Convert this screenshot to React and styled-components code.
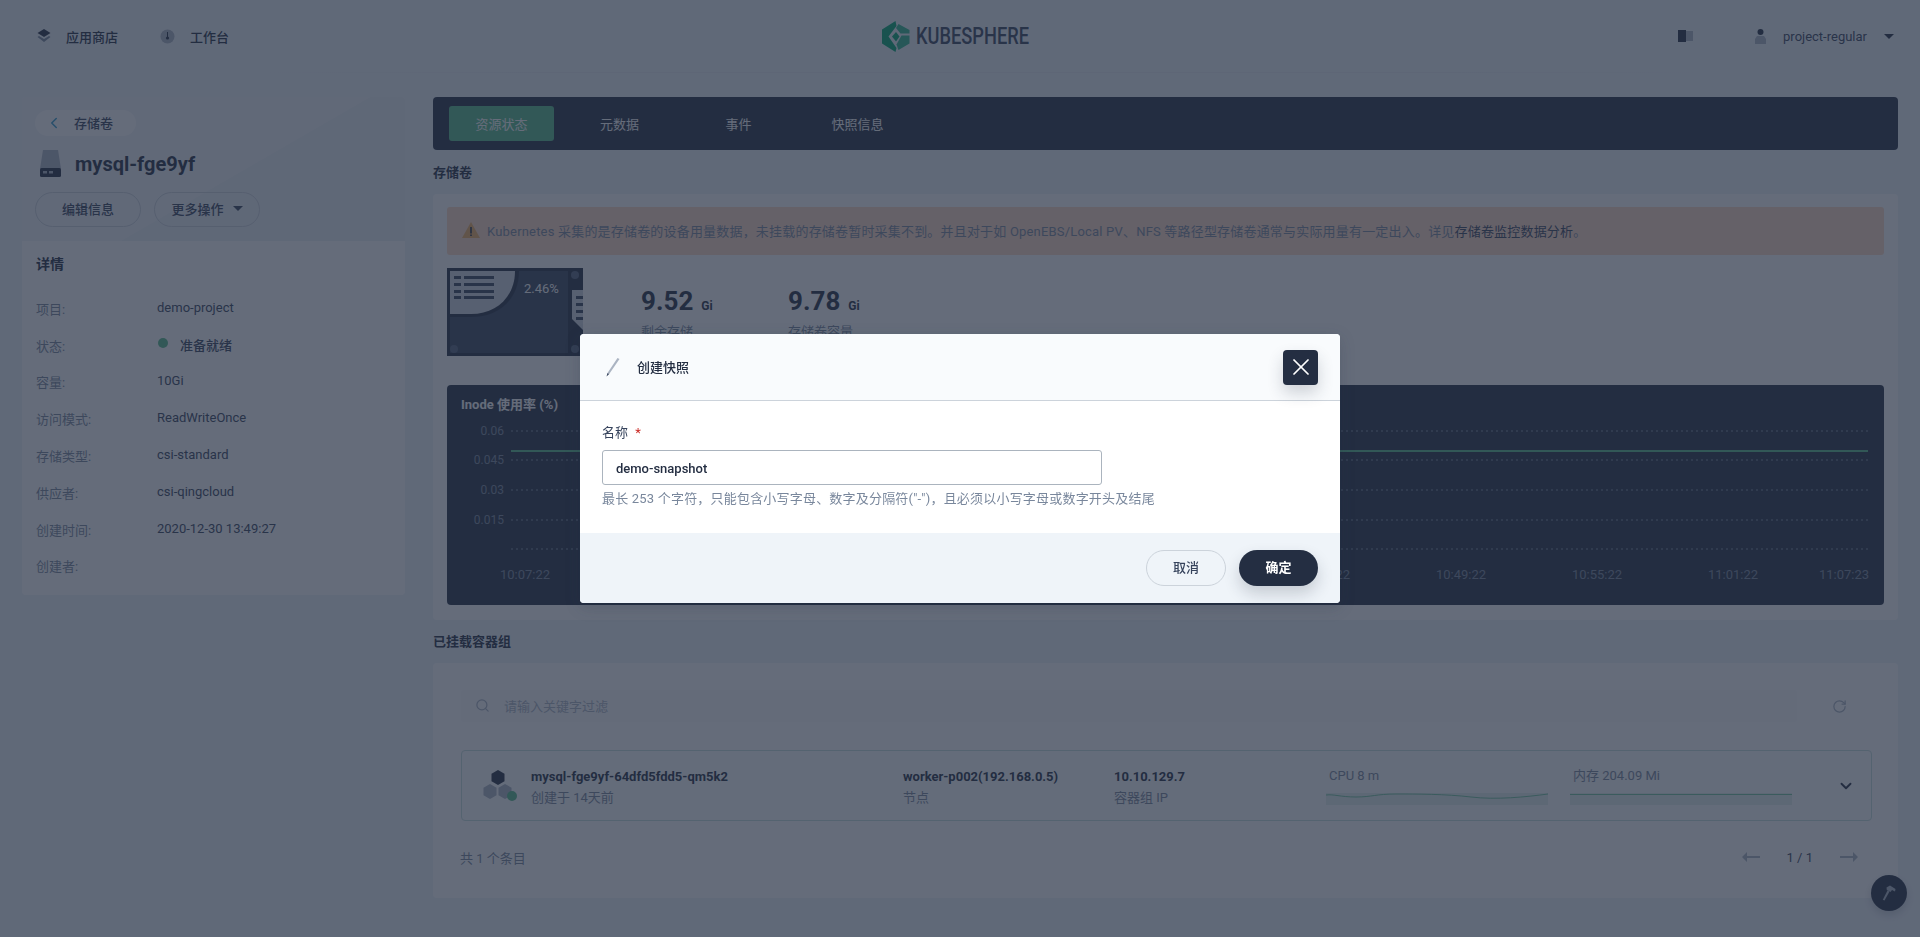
import React from 'react';
import styled, { createGlobalStyle } from 'styled-components';
import { Search, RotateCw, ChevronLeft, ChevronDown, X } from 'lucide-react';

const GlobalStyle = createGlobalStyle`
  html, body {
    margin: 0;
    padding: 0;
    height: 100%;
    background: #eff4f9;
    overflow: hidden;
  }
  body {
    font-family: Roboto, "Noto Sans CJK SC", sans-serif;
    font-size: 13px;
    color: #36435c;
  }
  * { box-sizing: border-box; }
`;

const Page = styled.div`
  height: 937px;
  padding: 0 22px;
`;

const Header = styled.header`
  height: 73px;
  margin: 0 -22px;
  padding: 0 26px 0 22px;
  display: grid;
  grid-template-columns: 1fr auto 1fr;
  align-items: center;
  border-bottom: 1px solid;
  border-image: linear-gradient(90deg, transparent 12%, #e6ebf1 30%, #e6ebf1 74%, transparent 90%) 1;
`;

const NavLeft = styled.nav`
  display: flex;
  align-items: center;
  gap: 42px;
  padding-left: 15px;
`;

const NavItem = styled.a`
  display: flex;
  align-items: center;
  gap: 15px;
  font-weight: 500;
  color: #242e42;
`;

const Logo = styled.div`
  display: flex;
  align-items: center;
  gap: 6px;
  margin-left: -6px;
`;

const LogoText = styled.span`
  display: inline-block;
  width: 113px;
  font-size: 24px;
  line-height: 30px;
  font-weight: 500;
  color: #36435c;
  white-space: nowrap;
  transform: scaleX(0.76);
  transform-origin: left center;
`;

const NavRight = styled.div`
  display: flex;
  align-items: center;
  justify-content: flex-end;
  color: #36435c;
`;

const UserName = styled.span`
  margin: 0 17px 0 16px;
`;

const BookWrap = styled.span`
  display: flex;
  margin-right: 60px;
`;

const Caret = styled.span`
  display: inline-block;
  width: 0;
  height: 0;
  border-left: 5px solid transparent;
  border-right: 5px solid transparent;
  border-top: 5px solid ${p => p.$color || '#242e42'};
`;

const Layout = styled.div`
  display: grid;
  grid-template-columns: 383px 1fr;
  column-gap: 28px;
  padding-top: 24px;
`;

const Side = styled.aside`
  align-self: start;
  border-radius: 4px;
  background: #f9fbfd;
`;

const SideHead = styled.div`
  height: 144px;
  padding: 13px 13px 0;
  background:
    linear-gradient(150deg, transparent 55%, rgba(200, 212, 225, .12) 55.2%),
    #f1f4f8;
  border-radius: 4px 4px 0 0;
`;

const BackPill = styled.a`
  display: inline-flex;
  align-items: center;
  width: 101px;
  height: 26px;
  padding: 0 0 1px 10px;
  border-radius: 13px;
  background: #fff;
  font-weight: 500;
  color: #36435c;
`;

const BackText = styled.span`
  margin-left: 11px;
`;

const TitleRow = styled.div`
  display: flex;
  align-items: center;
  gap: 13px;
  margin-top: 14px;
  padding-left: 5px;
  height: 27px;
`;

const Title = styled.h1`
  margin: 0;
  font-size: 20px;
  line-height: 28px;
  font-weight: 700;
  color: #242e42;
`;

const ActionRow = styled.div`
  display: flex;
  gap: 13px;
  margin-top: 15px;
`;

const GhostButton = styled.button`
  display: flex;
  align-items: center;
  justify-content: center;
  gap: 9px;
  width: ${p => p.$width || 106}px;
  height: 35px;
  padding: 0 0 3px;
  border-radius: 18px;
  border: 1px solid #ccd3db;
  background: transparent;
  font: 500 13px Roboto, "Noto Sans CJK SC", sans-serif;
  color: #36435c;
`;

const Details = styled.div`
  padding: 12px 14px 12px;
  background: #fff;
  border-radius: 0 0 4px 4px;
`;

const DetailsTitle = styled.h3`
  margin: 0 0 14px;
  font-size: 14px;
  line-height: 22px;
  font-weight: 700;
  color: #242e42;
`;

const DetailRow = styled.div`
  display: grid;
  grid-template-columns: 121px 1fr;
  height: 36.8px;
  align-items: center;
`;

const DetailLabel = styled.span`
  color: #79879c;
  padding-top: 2px;
`;

const DetailValue = styled.span`
  display: flex;
  align-items: center;
  gap: 12px;
  color: #36435c;
  font-weight: ${p => (p.$bold ? 500 : 400)};
`;

const Dot = styled.i`
  width: 10px;
  height: 10px;
  margin: 0 0 2px 1px;
  border-radius: 50%;
  background: #55bc8a;
`;

const Main = styled.main`
  min-width: 0;
`;

const Tabs = styled.div`
  display: flex;
  align-items: center;
  height: 53px;
  padding-left: 16px;
  border-radius: 4px;
  background: #242e42;
`;

const Tab = styled.a`
  width: ${p => (p.$active ? 105 : 119)}px;
  height: 35px;
  margin-left: ${p => (p.$active ? 0 : p.$first ? 6 : 0)}px;
  padding-bottom: 1px;
  display: flex;
  align-items: center;
  justify-content: center;
  border-radius: 3px;
  color: #fff;
  background: ${p => (p.$active ? '#55bc8a' : 'transparent')};
`;

const SectionTitle = styled.h4`
  margin: ${p => p.$top}px 0 11px;
  font-size: 13px;
  line-height: 20px;
  font-weight: 700;
  color: #242e42;
`;

const Card = styled.section`
  height: ${p => p.$height}px;
  padding: ${p => p.$pad};
  border-radius: 4px;
  background: #fff;
`;

const Alert = styled.div`
  display: flex;
  align-items: center;
  gap: 7px;
  height: 48px;
  padding: 0 0 2px 15px;
  border-radius: 3px;
  background: #ffd9c2;
  color: #79879c;
  white-space: nowrap;
  letter-spacing: .19px;
  b {
    font-weight: 400;
    color: #36435c;
  }
`;

const DiskRow = styled.div`
  display: flex;
  margin-top: 13px;
  height: 88px;
`;

const Stats = styled.div`
  display: flex;
  margin-left: 58px;
  padding-top: 16px;
`;

const Stat = styled.div`
  width: 147px;
`;

const StatValue = styled.div`
  font-size: 26px;
  line-height: 34px;
  font-weight: 700;
  color: #242e42;
  small {
    margin-left: 8px;
    font-size: 12px;
    font-weight: 700;
  }
`;

const StatLabel = styled.div`
  margin-top: -1px;
  line-height: 20px;
  color: #79879c;
`;

const ChartPanel = styled.div`
  height: 220px;
  margin-top: 29px;
  border-radius: 4px;
  background: #242e42;
  svg { display: block; }
`;

const SearchBar = styled.div`
  display: flex;
  align-items: center;
  justify-content: space-between;
  height: 32px;
`;

const SearchBox = styled.div`
  flex: 1;
  height: 32px;
  display: flex;
  align-items: center;
  gap: 14px;
  padding: 0 0 1px 14px;
  border-radius: 3px;
  background: #fafbfc;
  color: #abb4c2;
`;

const RefreshWrap = styled.span`
  display: flex;
  width: 75px;
  justify-content: center;
  padding-left: 10px;
  color: #abb4c2;
`;

const PodRow = styled.div`
  display: grid;
  grid-template-columns: 48px 372px 211px 212px 244px 223px 1fr;
  align-items: center;
  height: 71px;
  margin-top: 28px;
  padding-left: 21px;
  border: 1px solid #c7e0dd;
  border-radius: 4px;
  background: #fbfdfd;
`;

const PodCell = styled.div`
  padding-top: 3px;
  line-height: 18px;
`;

const PodMain = styled.div`
  font-size: 13px;
  font-weight: 700;
  color: #242e42;
  margin-bottom: 3px;
`;

const PodSub = styled.div`
  color: #79879c;
`;

const MetricLabel = styled.div`
  padding-left: 3px;
  color: #79879c;
  line-height: 18px;
  margin-bottom: 8px;
`;

const SparkWrap = styled.div`
  width: 222px;
  height: 12px;
  background: #e4f0ef;
  svg { display: block; }
`;

const ExpandWrap = styled.div`
  display: flex;
  color: #242e42;
  padding-left: 44px;
`;

const Pager = styled.div`
  display: flex;
  align-items: center;
  justify-content: space-between;
  height: 20px;
  margin-top: 26px;
  padding-right: 14px;
  color: #79879c;
`;

const PagerText = styled.span`
  margin-left: -1px;
`;

const PagerRight = styled.div`
  display: flex;
  align-items: center;
  gap: 27px;
  color: #36435c;
`;

const ArrowSvg = styled.svg`
  transform: ${p => (p.$flip ? 'scaleX(-1)' : 'none')};
`;

const FloatButton = styled.div`
  position: fixed;
  right: 13px;
  bottom: 26px;
  width: 36px;
  height: 36px;
  border-radius: 50%;
  display: flex;
  align-items: center;
  justify-content: center;
  background: #242e42;
  box-shadow: 0 4px 8px rgba(36, 46, 66, .2);
`;

const Mask = styled.div`
  position: fixed;
  inset: 0;
  display: flex;
  align-items: center;
  justify-content: center;
  background: rgba(35, 45, 65, .7);
`;

const Modal = styled.div`
  width: 760px;
  height: 269px;
  display: flex;
  flex-direction: column;
  border-radius: 4px;
  background: #fff;
  overflow: hidden;
  box-shadow: 0 4px 16px rgba(35, 45, 65, .2);
`;

const ModalHead = styled.div`
  display: flex;
  align-items: center;
  height: 67px;
  padding: 0 22px 0 26px;
  border-bottom: 1px solid #ccd3db;
  background: #f9fbfd;
`;

const ModalTitle = styled.div`
  flex: 1;
  margin-left: 17px;
  padding-bottom: 2px;
  font-weight: 500;
  color: #242e42;
`;

const CloseButton = styled.button`
  width: 35px;
  height: 35px;
  padding: 0;
  display: flex;
  align-items: center;
  justify-content: center;
  border: 0;
  border-radius: 4px;
  color: #fff;
  background: #242e42;
  box-shadow: 0 8px 16px rgba(36, 46, 66, .2);
`;

const ModalBody = styled.div`
  flex: 1;
  padding: 22px 22px 0;
`;

const FieldLabel = styled.label`
  display: block;
  height: 20px;
  line-height: 20px;
  margin-bottom: 7px;
  color: #36435c;
  i {
    margin-left: 4px;
    font-style: normal;
    color: #ca2621;
  }
`;

const NameInput = styled.input`
  display: block;
  width: 500px;
  height: 35px;
  padding: 1px 13px 0;
  border: 1px solid #abb4be;
  border-radius: 3px;
  outline: none;
  font: 500 13px Roboto, "Noto Sans CJK SC", sans-serif;
  color: #242e42;
`;

const Hint = styled.div`
  margin-top: 4px;
  line-height: 20px;
  color: #79879c;
  letter-spacing: .2px;
`;

const ModalFoot = styled.div`
  display: flex;
  align-items: center;
  justify-content: flex-end;
  gap: 13px;
  height: 70px;
  padding: 0 22px;
  background: #eff4f9;
`;

const CancelButton = styled.button`
  width: 80px;
  height: 36px;
  padding: 0 0 3px;
  border: 1px solid #ccd3db;
  border-radius: 18px;
  background: transparent;
  font: 500 13px Roboto, "Noto Sans CJK SC", sans-serif;
  color: #36435c;
`;

const ConfirmButton = styled(CancelButton)`
  width: 79px;
  border: 0;
  font-weight: 700;
  color: #fff;
  background: #242e42;
  box-shadow: 0 8px 16px rgba(36, 46, 66, .2);
`;

const detailRows = [
  ['项目:', 'demo-project'],
  ['状态:', '准备就绪'],
  ['容量:', '10Gi'],
  ['访问模式:', 'ReadWriteOnce'],
  ['存储类型:', 'csi-standard'],
  ['供应者:', 'csi-qingcloud'],
  ['创建时间:', '2020-12-30 13:49:27'],
  ['创建者:', ''],
];

const tabs = ['元数据', '事件', '快照信息'];

const yTicks = [['0.06', 46], ['0.045', 75], ['0.03', 105], ['0.015', 135], ['', 164]];
// ticks that sit behind the dialog are left out
const xTicks = [
  ['10:07:22', 79], ['10:43:22', 879], ['10:49:22', 1015], ['10:55:22', 1151], ['11:01:22', 1287], ['11:07:23', 1398],
];

function LogoMark() {
  return (
    <svg width="28" height="31" viewBox="0 0 28 31">
      <path fill="#00a971" d="M13.500 0 0 8.500v14L13.500 31l1-4L6.500 15.500 14.500 5z" />
      <path fill="#00a971" opacity=".8" d="M16.500 3 27.500 9v3.500l-9 0-4.500-5.500z" />
      <path fill="#00a971" opacity=".8" d="M27.500 14.500v8L16.500 29l-2-5.500 5-9z" />
      <path fill="#00a971" d="M10 15.500l4-4.500 3.500 4.500-3.500 5z" />
    </svg>
  );
}

function StoreIcon() {
  return (
    <svg width="14" height="14" viewBox="0 0 14 14">
      <path fill="#242e42" d="M7 0l6.500 4L7 8 .5 4z" />
      <path fill="#79879c" d="M2 7l5 3 5-3 1.500 1L7 13 .5 8z" />
    </svg>
  );
}

function DashIcon() {
  return (
    <svg width="15" height="15" viewBox="0 0 15 15">
      <circle cx="7.5" cy="7.500" r="7" fill="#abb4c2" />
      <path fill="#242e42" d="M7 3h1v6H7z" />
      <circle cx="7.500" cy="9" r="1.600" fill="#242e42" />
    </svg>
  );
}

function BookIcon() {
  return (
    <svg width="16" height="12" viewBox="0 0 16 12">
      <rect x="0" y="0" width="8" height="12" fill="#242e42" />
      <rect x="8" y="1" width="7" height="10" fill="#abb4c2" />
    </svg>
  );
}

function UserIcon() {
  return (
    <svg width="13" height="15" viewBox="0 0 13 15">
      <circle cx="6.500" cy="3" r="3" fill="#242e42" />
      <path fill="#abb4c2" d="M1 15V10l2-3h7l2 3v5z" />
    </svg>
  );
}

function VolumeIcon() {
  return (
    <svg width="22" height="27" viewBox="0 0 22 27">
      <path fill="#abb4c2" d="M3 0h15l3 19H0z" />
      <rect x="0" y="18" width="21" height="9" rx="1.500" fill="#242e42" />
      <rect x="3" y="21" width="4" height="2.500" fill="#abb4c2" />
      <rect x="9" y="21" width="4" height="2.500" fill="#abb4c2" />
    </svg>
  );
}

function WarnIcon() {
  return (
    <svg width="18" height="16" viewBox="0 0 18 16">
      <path fill="#f0b060" d="M9 0l9 16H0z" />
      <path fill="#242e42" d="M8.200 5h1.600v6.500H8.200zM8.200 12.500h1.600V14H8.200z" />
    </svg>
  );
}

function DiskGraphic() {
  const bars = [10, 17, 24, 30];
  return (
    <svg width="136" height="88" viewBox="0 0 136 88">
      <rect width="136" height="88" fill="#242e42" />
      <rect x="3" y="3" width="118" height="82" fill="#36435c" />
      <path fill="#242e42" d="M3 3h69c0 30-22 46-48 46H3z" />
      <path fill="#d1d7df" d="M3 3h65c0 26-19 43-44 43H3z" />
      {bars.map(y => (
        <g key={y} fill="#36435c">
          <rect x="7" y={y - 2} width="7" height="3" />
          <rect x="17" y={y - 2} width="30" height="3" />
        </g>
      ))}
      <text x="77" y="25" fontSize="13" fill="#fff" fontFamily="Roboto, sans-serif">2.46%</text>
      <path fill="#d1d7df" d="M125 22h11v40l-11-11z" />
      {[28, 35, 42, 49].map(y => (
        <rect key={y} x="129" y={y} width="7" height="3" fill="#36435c" />
      ))}
      {[[128, 7], [128, 81], [7, 81]].map(([cx, cy]) => (
        <circle key={cx + '-' + cy} cx={cx} cy={cy} r="4" fill="#55637c" />
      ))}
    </svg>
  );
}

function InodeChart() {
  return (
    <svg width="1437" height="220" viewBox="0 0 1437 220" fontFamily="Roboto, sans-serif">
      <text x="14" y="24" fontSize="13" fontWeight="700" fill="#fff" fontFamily='Roboto, "Noto Sans CJK SC", sans-serif'>Inode 使用率 (%)</text>
      {yTicks.map(([label, y]) => (
        <g key={y}>
          <line x1="64" x2="1421" y1={y} y2={y} stroke="#79879c" strokeDasharray="2 3" />
          <text x="57" y={y + 4} fontSize="12" textAnchor="end" fill="#79879c">{label}</text>
        </g>
      ))}
      <line x1="64" x2="1421" y1="66" y2="66" stroke="#55bc8a" strokeWidth="2" />
      {xTicks.map(([label, x]) => (
        <text key={label} x={x - 1} y="194" fontSize="13" textAnchor="middle" fill="#79879c">{label}</text>
      ))}
    </svg>
  );
}

function PodIcon() {
  const hex = (x, y, fill) => (
    <path fill={fill} d={`M${x} ${y}l6.500 3.700v7.600L${x} ${y + 15}l-6.500-3.700v-7.600z`} />
  );
  return (
    <svg width="36" height="36" viewBox="0 0 36 36">
      {hex(15, 2, '#242e42')}
      {hex(7, 16, '#abb4c2')}
      {hex(22, 16, '#abb4c2')}
      <circle cx="29" cy="28" r="5" fill="#55bc8a" />
    </svg>
  );
}

function Spark({ d }) {
  return (
    <SparkWrap>
      <svg width="222" height="12" viewBox="0 0 222 12">
        <path d={d} fill="none" stroke="#55bc8a" strokeOpacity=".8" strokeWidth="1" />
      </svg>
    </SparkWrap>
  );
}

function ArrowIcon({ flip, color }) {
  return (
    <ArrowSvg $flip={flip} width="18" height="10" viewBox="0 0 18 10">
      <path fill={color} d="M0 5l5-5v4h13v2H5v4z" />
    </ArrowSvg>
  );
}

function PencilIcon() {
  return (
    <svg width="14" height="20" viewBox="0 0 14 20">
      <path fill="#abb4c2" d="M11.500 1l2 1L3.200 17 1.500 16z" />
      <path fill="#36435c" d="M1.500 16l1.700 1L.5 19.500z" />
    </svg>
  );
}

function HammerIcon() {
  return (
    <svg width="14" height="16" viewBox="0 0 14 16">
      <path fill="#abb4c2" d="M5.500 5.500l2 1L2.500 15.500.8 14.700z" />
      <path fill="#abb4c2" d="M4.500 2.500 8 .5l5.500 3.500-.5 2.500-3-1.500-1.500 2L4.800 5z" />
    </svg>
  );
}

export default function App() {
  return (
    <Page>
      <GlobalStyle />
      <Header>
        <NavLeft>
          <NavItem><StoreIcon />应用商店</NavItem>
          <NavItem><DashIcon />工作台</NavItem>
        </NavLeft>
        <Logo>
          <LogoMark />
          <LogoText>KUBESPHERE</LogoText>
        </Logo>
        <NavRight>
          <BookWrap><BookIcon /></BookWrap>
          <UserIcon />
          <UserName>project-regular</UserName>
          <Caret />
        </NavRight>
      </Header>

      <Layout>
        <Side>
          <SideHead>
            <BackPill>
              <ChevronLeft size={18} color="#329dce" />
              <BackText>存储卷</BackText>
            </BackPill>
            <TitleRow>
              <VolumeIcon />
              <Title>mysql-fge9yf</Title>
            </TitleRow>
            <ActionRow>
              <GhostButton>编辑信息</GhostButton>
              <GhostButton>更多操作<Caret $color="#36435c" /></GhostButton>
            </ActionRow>
          </SideHead>
          <Details>
            <DetailsTitle>详情</DetailsTitle>
            {detailRows.map(([label, value], i) => (
              <DetailRow key={label}>
                <DetailLabel>{label}</DetailLabel>
                <DetailValue $bold={i === 1}>
                  {i === 1 && <Dot />}
                  {value}
                </DetailValue>
              </DetailRow>
            ))}
          </Details>
        </Side>

        <Main>
          <Tabs>
            <Tab $active>资源状态</Tab>
            {tabs.map((tab, i) => (
              <Tab key={tab} $first={i === 0}>{tab}</Tab>
            ))}
          </Tabs>

          <SectionTitle $top={13}>存储卷</SectionTitle>
          <Card $height={426} $pad="13px 14px">
            <Alert>
              <WarnIcon />
              <span>
                Kubernetes 采集的是存储卷的设备用量数据，未挂载的存储卷暂时采集不到。并且对于如 OpenEBS/Local PV、NFS 等路径型存储卷通常与实际用量有一定出入。详见<b>存储卷监控数据分析</b>。
              </span>
            </Alert>
            <DiskRow>
              <DiskGraphic />
              <Stats>
                <Stat>
                  <StatValue>9.52<small>Gi</small></StatValue>
                  <StatLabel>剩余存储</StatLabel>
                </Stat>
                <Stat>
                  <StatValue>9.78<small>Gi</small></StatValue>
                  <StatLabel>存储卷容量</StatLabel>
                </Stat>
              </Stats>
            </DiskRow>
            <ChartPanel><InodeChart /></ChartPanel>
          </Card>

          <SectionTitle $top={12}>已挂载容器组</SectionTitle>
          <Card $height={235} $pad="27px 26px 0 28px">
            <SearchBar>
              <SearchBox>
                <Search size={15} />
                请输入关键字过滤
              </SearchBox>
              <RefreshWrap><RotateCw size={15} /></RefreshWrap>
            </SearchBar>
            <PodRow>
              <PodIcon />
              <PodCell>
                <PodMain>mysql-fge9yf-64dfd5fdd5-qm5k2</PodMain>
                <PodSub>创建于 14天前</PodSub>
              </PodCell>
              <PodCell>
                <PodMain>worker-p002(192.168.0.5)</PodMain>
                <PodSub>节点</PodSub>
              </PodCell>
              <PodCell>
                <PodMain>10.10.129.7</PodMain>
                <PodSub>容器组 IP</PodSub>
              </PodCell>
              <div>
                <MetricLabel>CPU 8 m</MetricLabel>
                <Spark d="M0 2C8 1 14 4 30 4S50 1 70 1 120 1 145 4 200 4 222 1" />
              </div>
              <div>
                <MetricLabel>内存 204.09 Mi</MetricLabel>
                <Spark d="M0 1.500H222" />
              </div>
              <ExpandWrap><ChevronDown size={18} strokeWidth={2.500} /></ExpandWrap>
            </PodRow>
            <Pager>
              <PagerText>共 1 个条目</PagerText>
              <PagerRight>
                <ArrowIcon color="#abb4c2" />
                <span>1 / 1</span>
                <ArrowIcon flip color="#abb4c2" />
              </PagerRight>
            </Pager>
          </Card>
        </Main>
      </Layout>

      <FloatButton><HammerIcon /></FloatButton>

      <Mask>
        <Modal>
          <ModalHead>
            <PencilIcon />
            <ModalTitle>创建快照</ModalTitle>
            <CloseButton><X size={28} strokeWidth={1.500} /></CloseButton>
          </ModalHead>
          <ModalBody>
            <FieldLabel>名称 <i>*</i></FieldLabel>
            <NameInput defaultValue="demo-snapshot" />
            <Hint>最长 253 个字符，只能包含小写字母、数字及分隔符("-")，且必须以小写字母或数字开头及结尾</Hint>
          </ModalBody>
          <ModalFoot>
            <CancelButton>取消</CancelButton>
            <ConfirmButton>确定</ConfirmButton>
          </ModalFoot>
        </Modal>
      </Mask>
    </Page>
  );
}
